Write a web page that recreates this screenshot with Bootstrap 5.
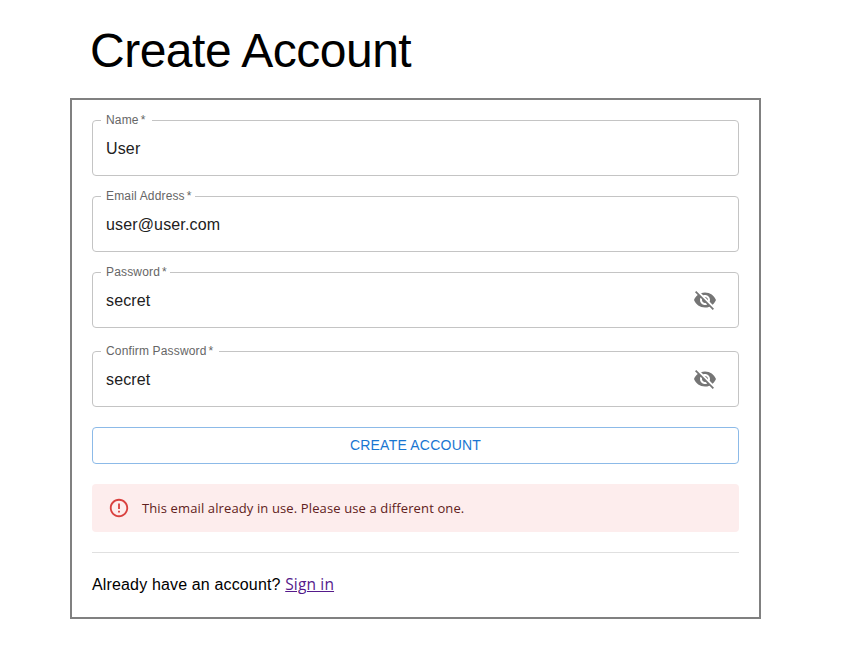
<!DOCTYPE html>
<html lang="en">
<head>
<meta charset="utf-8">
<meta name="viewport" content="width=device-width, initial-scale=1">
<title>Create Account</title>
<link href="https://cdn.jsdelivr.net/npm/bootstrap@5.3.0/dist/css/bootstrap.min.css" rel="stylesheet">
<style>
body { font-family: "Liberation Sans", Arial, sans-serif; color: #000; background: #fff; }
.page { width: 691px; margin-left: 70px; padding-top: 23px; }
.title { font-size: 48px; line-height: 56px; letter-spacing: -.5px; margin: 0 0 19px 20px; font-weight: 400; }
.panel { border: 2px solid #808080; padding: 20px; height: 521px; }
.field { height: 56px; margin-bottom: 20px; }
.field-last-gap { margin-bottom: 23px; }
.field .form-control { height: 56px; padding: 2px 13px 0; font-size: 16px; letter-spacing: .15px; color: #212121; border: 1px solid #c4c4c4; border-radius: 4px; background: #fff; }
.field label { position: absolute; left: 9px; top: -8px; height: 16px; padding-left: 5px; line-height: 16px; font-size: 12px; letter-spacing: .16px; white-space: nowrap; color: #666; background: #fff; }
.field label span { margin-left: -1.5px; }
.notch-name { width: 51px; } .notch-email { width: 94px; } .notch-pass { width: 69px; } .notch-confirm { width: 118px; }
.eye { position: absolute; right: 22px; top: 16px; width: 24px; height: 24px; padding: 0; border: 0; background: none; line-height: 0; }
.submit { height: 37px; padding: 0; font-size: 14px; letter-spacing: .22px; color: #1976d2; border: 1px solid #8cbae8; border-radius: 4px; margin-bottom: 20px; }
.notice { height: 48px; padding: 0 16px; margin-bottom: 20px; background: #fdeded; color: #5f2120; border: 0; border-radius: 4px; font-family: "Open Sans", "Noto Sans", sans-serif; font-size: 13px; letter-spacing: .12px; }
.notice svg { margin-right: 12px; }
.notice-text { padding-top: 2px; }
.rule { margin: 0 0 19px; border-top: 1px solid #e0e0e0; opacity: 1; }
.signin { font-size: 16px; line-height: 24px; letter-spacing: .15px; }
.signin a { font-family: "Open Sans", "Noto Sans", sans-serif; font-size: 15.5px; color: #551a8b; }
</style>
</head>
<body>
<main class="page">
  <h1 class="title">Create Account</h1>
  <form class="panel">
    <div class="field position-relative">
      <input id="name" class="form-control" type="text" value="User">
      <label for="name" class="notch-name">Name<span> *</span></label>
    </div>
    <div class="field position-relative">
      <input id="email" class="form-control" type="text" value="user@user.com">
      <label for="email" class="notch-email">Email Address<span> *</span></label>
    </div>
    <div class="field field-last-gap position-relative">
      <input id="password" class="form-control" type="text" value="secret">
      <label for="password" class="notch-pass">Password<span> *</span></label>
      <button type="button" class="eye" aria-label="Toggle password visibility"><svg width="24" height="24" viewBox="0 0 24 24" fill="#757575"><path d="M12 7c2.76 0 5 2.24 5 5 0 .65-.13 1.26-.36 1.83l2.92 2.92c1.51-1.26 2.7-2.89 3.43-4.75-1.73-4.39-6-7.5-11-7.5-1.4 0-2.74.25-3.98.7l2.16 2.16C10.74 7.13 11.35 7 12 7zM2 4.27l2.28 2.28.46.46C3.08 8.3 1.78 10.02 1 12c1.73 4.39 6 7.5 11 7.5 1.55 0 3.03-.3 4.38-.84l.42.42L19.73 22 21 20.73 3.27 3 2 4.27zM7.53 9.8l1.55 1.55c-.05.21-.08.43-.08.65 0 1.66 1.34 3 3 3 .22 0 .44-.03.65-.08l1.55 1.55c-.67.33-1.41.53-2.2.53-2.76 0-5-2.24-5-5 0-.79.2-1.53.53-2.2zm4.31-.78l3.15 3.15.02-.16c0-1.66-1.34-3-3-3l-.17.01z"/></svg></button>
    </div>
    <div class="field position-relative">
      <input id="confirm" class="form-control" type="text" value="secret">
      <label for="confirm" class="notch-confirm">Confirm Password<span> *</span></label>
      <button type="button" class="eye" aria-label="Toggle password visibility"><svg width="24" height="24" viewBox="0 0 24 24" fill="#757575"><path d="M12 7c2.76 0 5 2.24 5 5 0 .65-.13 1.26-.36 1.83l2.92 2.92c1.51-1.26 2.7-2.89 3.43-4.75-1.73-4.39-6-7.5-11-7.5-1.4 0-2.74.25-3.98.7l2.16 2.16C10.74 7.13 11.35 7 12 7zM2 4.27l2.28 2.28.46.46C3.08 8.3 1.78 10.02 1 12c1.73 4.39 6 7.5 11 7.5 1.55 0 3.03-.3 4.38-.84l.42.42L19.73 22 21 20.73 3.27 3 2 4.27zM7.53 9.8l1.55 1.55c-.05.21-.08.43-.08.65 0 1.66 1.34 3 3 3 .22 0 .44-.03.65-.08l1.55 1.55c-.67.33-1.41.53-2.2.53-2.76 0-5-2.24-5-5 0-.79.2-1.53.53-2.2zm4.31-.78l3.15 3.15.02-.16c0-1.66-1.34-3-3-3l-.17.01z"/></svg></button>
    </div>
    <button type="button" class="btn submit w-100 d-flex align-items-center justify-content-center">CREATE ACCOUNT</button>
    <div class="alert notice d-flex align-items-center" role="alert">
      <svg width="22" height="22" viewBox="0 0 24 24" fill="#d9413f"><path d="M11 15h2v2h-2zm0-8h2v6h-2zm.99-5C6.47 2 2 6.48 2 12s4.47 10 9.99 10C17.52 22 22 17.52 22 12S17.52 2 11.99 2zM12 20c-4.42 0-8-3.58-8-8s3.58-8 8-8 8 3.58 8 8-3.58 8-8 8z"/></svg>
      <span class="notice-text">This email already in use. Please use a different one.</span>
    </div>
    <hr class="rule">
    <div class="signin">Already have an account? <a href="#">Sign in</a></div>
  </form>
</main>
<script src="https://cdn.jsdelivr.net/npm/bootstrap@5.3.0/dist/js/bootstrap.bundle.min.js"></script>
</body>
</html>
